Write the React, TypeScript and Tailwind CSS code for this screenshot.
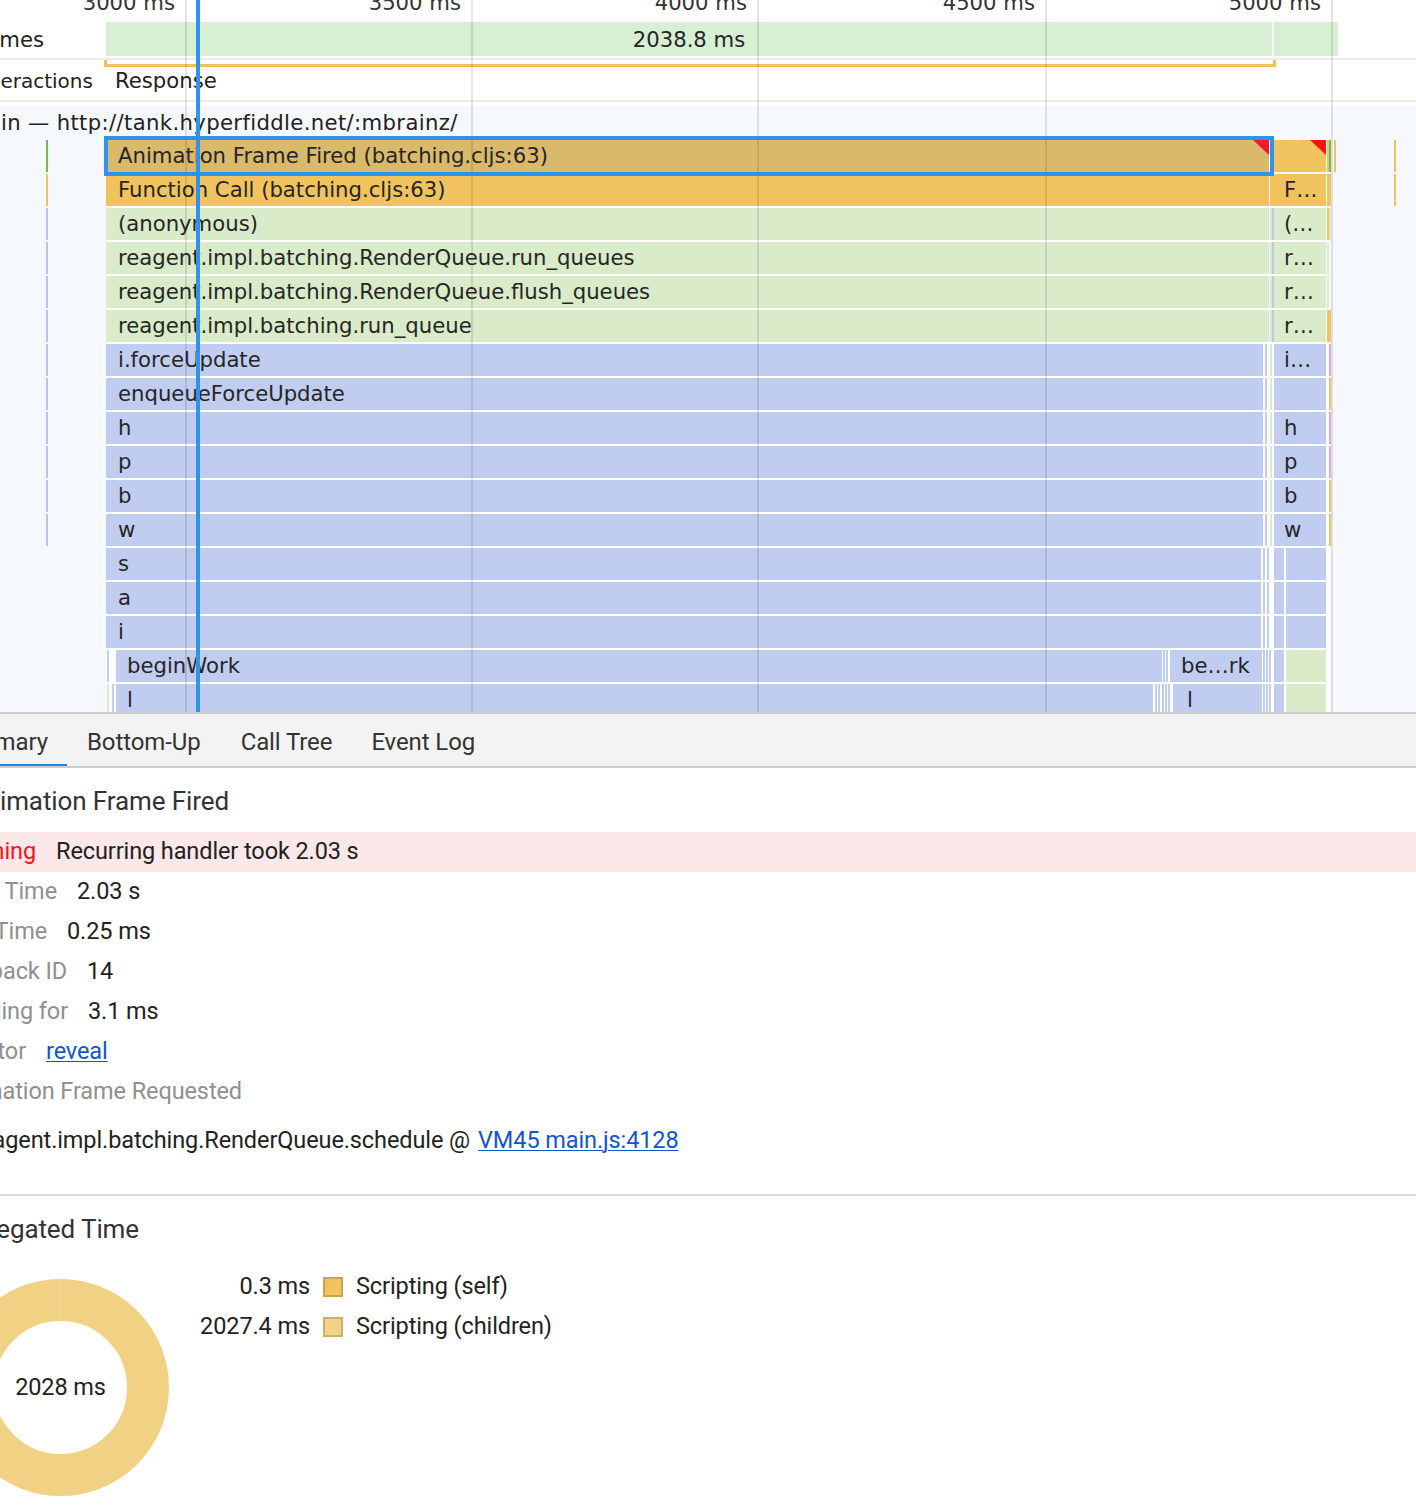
import React from "react";

const SEL = "#dbb96b";
const OR = "#f0c35e";
const GR = "#d9ebc9";
const BL = "#c1cdf0";
const BLL = "#b9c6f0";
const PK = "#e7a9dc";
const GN = "#6cbf4a";

type Seg = { x: number; w: number; c: string; t?: string; pl?: number; tri?: string };
type Row = { segs: Seg[]; left?: string };

const line = (x: number, c: string): Seg => ({ x, w: 2, c });

const greenRow = (t: string, t2: string, extra: Seg[] = []): Row => ({
  left: BLL,
  segs: [
    { x: 106, w: 1163, c: GR, t, pl: 12 },
    line(1270, GR),
    line(1272, BLL),
    { x: 1274, w: 52, c: GR, t: t2, pl: 10 },
    ...extra,
  ],
});

const blueRow = (t: string, t2: string, right: string, extra: Seg[] = []): Row => ({
  left: BLL,
  segs: [
    ...extra,
    { x: 106, w: 1157, c: BL, t, pl: 12 },
    line(1265, BL),
    line(1270, GR),
    { x: 1274, w: 52, c: BL, t: t2, pl: 10 },
    line(1329, right),
  ],
});

const lowRow = (t: string): Row => ({
  segs: [
    { x: 106, w: 1155, c: BL, t, pl: 12 },
    line(1263, BL),
    line(1267, BL),
    { x: 1274, w: 10, c: BL },
    { x: 1286, w: 40, c: BL },
  ],
});

const rows: Row[] = [
  {
    left: GN,
    segs: [
      { x: 106, w: 1163, c: SEL, t: "Animation Frame Fired (batching.cljs:63)", pl: 12, tri: "#ee1b2e" },
      { x: 1274, w: 52, c: OR, tri: "#ff1010" },
      line(1327, OR),
      line(1329, GN),
      line(1334, OR),
      line(1394, OR),
    ],
  },
  {
    left: OR,
    segs: [
      { x: 106, w: 1163, c: OR, t: "Function Call (batching.cljs:63)", pl: 12 },
      line(1270, OR),
      line(1272, OR),
      { x: 1274, w: 52, c: OR, t: "F…", pl: 10 },
      line(1327, OR),
      line(1329, OR),
      line(1394, OR),
    ],
  },
  greenRow("(anonymous)", "(…", [line(1327, OR), line(1329, GR)]),
  greenRow("reagent.impl.batching.RenderQueue.run_queues", "r…", [line(1327, GR)]),
  greenRow("reagent.impl.batching.RenderQueue.flush_queues", "r…", [line(1327, GR)]),
  greenRow("reagent.impl.batching.run_queue", "r…", [line(1327, OR), line(1329, OR)]),
  blueRow("i.forceUpdate", "i…", PK),
  blueRow("enqueueForceUpdate", "", OR),
  blueRow("h", "h", PK),
  blueRow("p", "p", PK, [line(106, OR)]),
  blueRow("b", "b", OR),
  blueRow("w", "w", OR),
  lowRow("s"),
  lowRow("a"),
  lowRow("i"),
  {
    segs: [
      line(107, BL),
      { x: 116, w: 1046, c: BL, t: "beginWork", pl: 11 },
      line(1163, BL),
      line(1166, BL),
      { x: 1170, w: 92, c: BL, t: "be…rk", pl: 11 },
      line(1263, BL),
      line(1266, BL),
      line(1269, BL),
      { x: 1274, w: 10, c: BL },
      { x: 1286, w: 40, c: GR },
    ],
  },
  {
    segs: [
      line(107, GR),
      line(112, BL),
      { x: 116, w: 1037, c: BL, t: "l", pl: 11 },
      line(1155, BL),
      line(1158, BL),
      line(1162, BL),
      line(1165, BL),
      line(1168, BL),
      { x: 1173, w: 89, c: BL, t: "l", pl: 14 },
      line(1263, BL),
      line(1266, BL),
      line(1269, BL),
      { x: 1274, w: 10, c: BL },
      { x: 1286, w: 40, c: GR },
    ],
  },
];

const gridXs = [185, 471, 757, 1045, 1331];
const ruler = [
  { r: 175, t: "3000 ms" },
  { r: 461, t: "3500 ms" },
  { r: 747, t: "4000 ms" },
  { r: 1035, t: "4500 ms" },
  { r: 1321, t: "5000 ms" },
];

function FlameRow({ row }: { row: Row }) {
  return (
    <div className="relative h-[34px]">
      {row.left && (
        <div className="absolute left-[46px] top-[1px] h-[32px] w-[2px]" style={{ background: row.left }} />
      )}
      {row.segs.map((s, i) => (
        <div
          key={i}
          className="absolute top-[1px] h-[32px] overflow-hidden whitespace-nowrap leading-[32px] text-[#262626]"
          style={{ left: s.x, width: s.w, background: s.c, paddingLeft: s.pl }}
        >
          {s.t}
          {s.tri && (
            <svg className="absolute right-0 top-0" width="16" height="15" viewBox="0 0 16 15">
              <polygon points="0,0 16,0 16,15" fill={s.tri} />
            </svg>
          )}
        </div>
      ))}
    </div>
  );
}

function Timeline() {
  return (
    <div className="relative h-[712px] overflow-hidden bg-white font-['DejaVu_Sans',sans-serif] text-[21.2px] text-[#222]">
      {/* ruler */}
      <div className="relative h-[22px]">
        {ruler.map((l) => (
          <div
            key={l.t}
            className="absolute top-[-9px] leading-[24px] text-[#333] whitespace-nowrap"
            style={{ right: 1416 - l.r }}
          >
            {l.t}
          </div>
        ))}
      </div>
      {/* frames */}
      <div className="relative h-[38px] border-b-2 border-[#ededed]">
        <div className="absolute left-[-33px] top-0 h-[36px] leading-[36px] whitespace-nowrap">Frames</div>
        <div className="absolute left-[106px] top-0 h-[34px] w-[1166px] bg-[#d7efd3] text-center leading-[36px] text-[#262626]">
          2038.8 ms
        </div>
        <div className="absolute left-[1274px] top-0 h-[34px] w-[64px] bg-[#d7efd3]" />
      </div>
      {/* interactions */}
      <div className="relative h-[42px] border-b-2 border-[#ededed]">
        <div className="absolute left-[104px] top-[4px] h-[3px] w-[1172px] bg-[#efc15a]" />
        <div className="absolute left-[104px] top-0 h-[7px] w-[3px] bg-[#efc15a]" />
        <div className="absolute left-[1273px] top-0 h-[7px] w-[3px] bg-[#efc15a]" />
        <div className="absolute left-[-26px] top-0 h-[40px] text-[20px] leading-[42px] whitespace-nowrap">Interactions</div>
        <div className="absolute left-[115px] top-0 h-[40px] leading-[42px] whitespace-nowrap">Response</div>
      </div>
      <div className="h-[4px]" />
      {/* main thread */}
      <div className="relative h-[606px] bg-[#f5f8fd]">
        <div className="relative h-[33px]">
          <div className="absolute left-[-31px] top-0 tracking-[0.35px] leading-[34px] whitespace-nowrap">
            Main — http://tank.hyperfiddle.net/:mbrainz/
          </div>
        </div>
        <div className="relative">
          <div className="absolute left-[106px] top-0 bottom-0 w-[1224px] bg-white" />
          {rows.map((r, i) => (
            <FlameRow key={i} row={r} />
          ))}
        </div>
      </div>
      {/* grid lines */}
      {gridXs.map((x) => (
        <div key={x} className="absolute top-0 h-full w-[2px] bg-black/10" style={{ left: x }} />
      ))}
      {/* selection outline */}
      <div className="absolute left-[104px] top-[136px] h-[40px] w-[1170px] border-[4px] border-[#2f93ea]" />
      {/* cursor */}
      <div className="absolute left-[196px] top-0 h-full w-[4px] bg-[#2f93ea]" />
    </div>
  );
}

function InfoRow({ label, labelRight, children }: { label: string; labelRight: number; children: React.ReactNode }) {
  return (
    <div className="flex h-[40px] items-center">
      <div className="flex shrink-0 justify-end overflow-hidden whitespace-nowrap text-[#8f8f8f]" style={{ width: labelRight }}>
        {label}
      </div>
      <div className="ml-[20px] whitespace-nowrap text-[#222]">{children}</div>
    </div>
  );
}

function Summary() {
  return (
    <div className="font-['Roboto',sans-serif] text-[23.5px] tracking-[-0.1px] text-[#222]">
      {/* tabs */}
      <div className="flex h-[56px] border-y-2 border-[#cccccc] bg-[#f3f3f3] pt-[4px] text-[24px] text-[#333]">
        <div className="relative flex w-[67px] shrink-0 items-center justify-end overflow-hidden whitespace-nowrap pr-[19px]">
          Summary
          <div className="absolute bottom-[-1px] left-0 h-[3px] w-full bg-[#1a8ae6]" />
        </div>
        <div className="flex items-center px-[20px] whitespace-nowrap">Bottom-Up</div>
        <div className="flex items-center px-[20px] whitespace-nowrap">Call Tree</div>
        <div className="flex items-center px-[19px] whitespace-nowrap">Event Log</div>
      </div>
      {/* title */}
      <div className="mt-[17px] flex h-[32px] items-center">
        <div className="flex w-[229px] shrink-0 justify-end overflow-hidden whitespace-nowrap text-[26px] text-[#333]">
          Animation Frame Fired
        </div>
      </div>
      {/* warning */}
      <div className="mt-[15px] flex h-[40px] items-center bg-[#fce8e8]">
        <div className="flex w-[36px] shrink-0 justify-end overflow-hidden whitespace-nowrap text-[#f0141e]">Warning</div>
        <div className="ml-[20px] whitespace-nowrap">Recurring handler took 2.03 s</div>
      </div>
      <InfoRow label="Total Time" labelRight={57}>2.03 s</InfoRow>
      <InfoRow label="Self Time" labelRight={47}>0.25 ms</InfoRow>
      <InfoRow label="Callback ID" labelRight={67}>14</InfoRow>
      <InfoRow label="Pending for" labelRight={68}>3.1 ms</InfoRow>
      <InfoRow label="Initiator" labelRight={26}>
        <span className="text-[#1155cc] underline decoration-1 underline-offset-2">reveal</span>
      </InfoRow>
      <div className="flex h-[40px] items-center">
        <div className="flex w-[242px] shrink-0 justify-end overflow-hidden whitespace-nowrap text-[#8f8f8f]">
          Animation Frame Requested
        </div>
      </div>
      <div className="mt-[9px] flex h-[40px] items-center">
        <div className="flex w-[470px] shrink-0 justify-end overflow-hidden whitespace-nowrap">
          reagent.impl.batching.RenderQueue.schedule @
        </div>
        <span className="ml-[8px] whitespace-nowrap text-[#1155cc] underline decoration-1 underline-offset-2">
          VM45 main.js:4128
        </span>
      </div>
      <div className="mt-[33px] h-[2px] bg-[#dddddd]" />
      <div className="mt-[13px] flex h-[40px] items-center">
        <div className="flex w-[139px] shrink-0 justify-end overflow-hidden whitespace-nowrap text-[26px] text-[#333]">
          Aggregated Time
        </div>
      </div>
      <div className="mt-[18px] flex items-start">
        <div className="relative ml-[-48px] mt-[12px] h-[217px] w-[217px] shrink-0">
          <svg width="217" height="217" viewBox="0 0 217 217" className="absolute inset-0">
            <circle cx="108.5" cy="108.5" r="87.5" fill="none" stroke="#f1d184" strokeWidth="42" />
            <line x1="108.5" y1="0" x2="108.5" y2="42" stroke="#f3d690" strokeWidth="1" />
          </svg>
          <div className="absolute inset-0 flex items-center justify-center whitespace-nowrap">2028 ms</div>
        </div>
        <div className="grid grid-cols-[141px_20px_auto] items-center gap-x-[13px]">
          <div className="flex h-[40px] items-center justify-end whitespace-nowrap">0.3 ms</div>
          <div className="h-[20px] w-[20px] border-2 border-[#c9a44e] bg-[#f0c35e]" />
          <div className="whitespace-nowrap">Scripting (self)</div>
          <div className="flex h-[40px] items-center justify-end whitespace-nowrap">2027.4 ms</div>
          <div className="h-[20px] w-[20px] border-2 border-[#cfae68] bg-[#f2d489]" />
          <div className="whitespace-nowrap">Scripting (children)</div>
        </div>
      </div>
    </div>
  );
}

export default function App() {
  return (
    <div className="h-[1510px] w-[1416px] overflow-hidden bg-white">
      <Timeline />
      <Summary />
    </div>
  );
}
